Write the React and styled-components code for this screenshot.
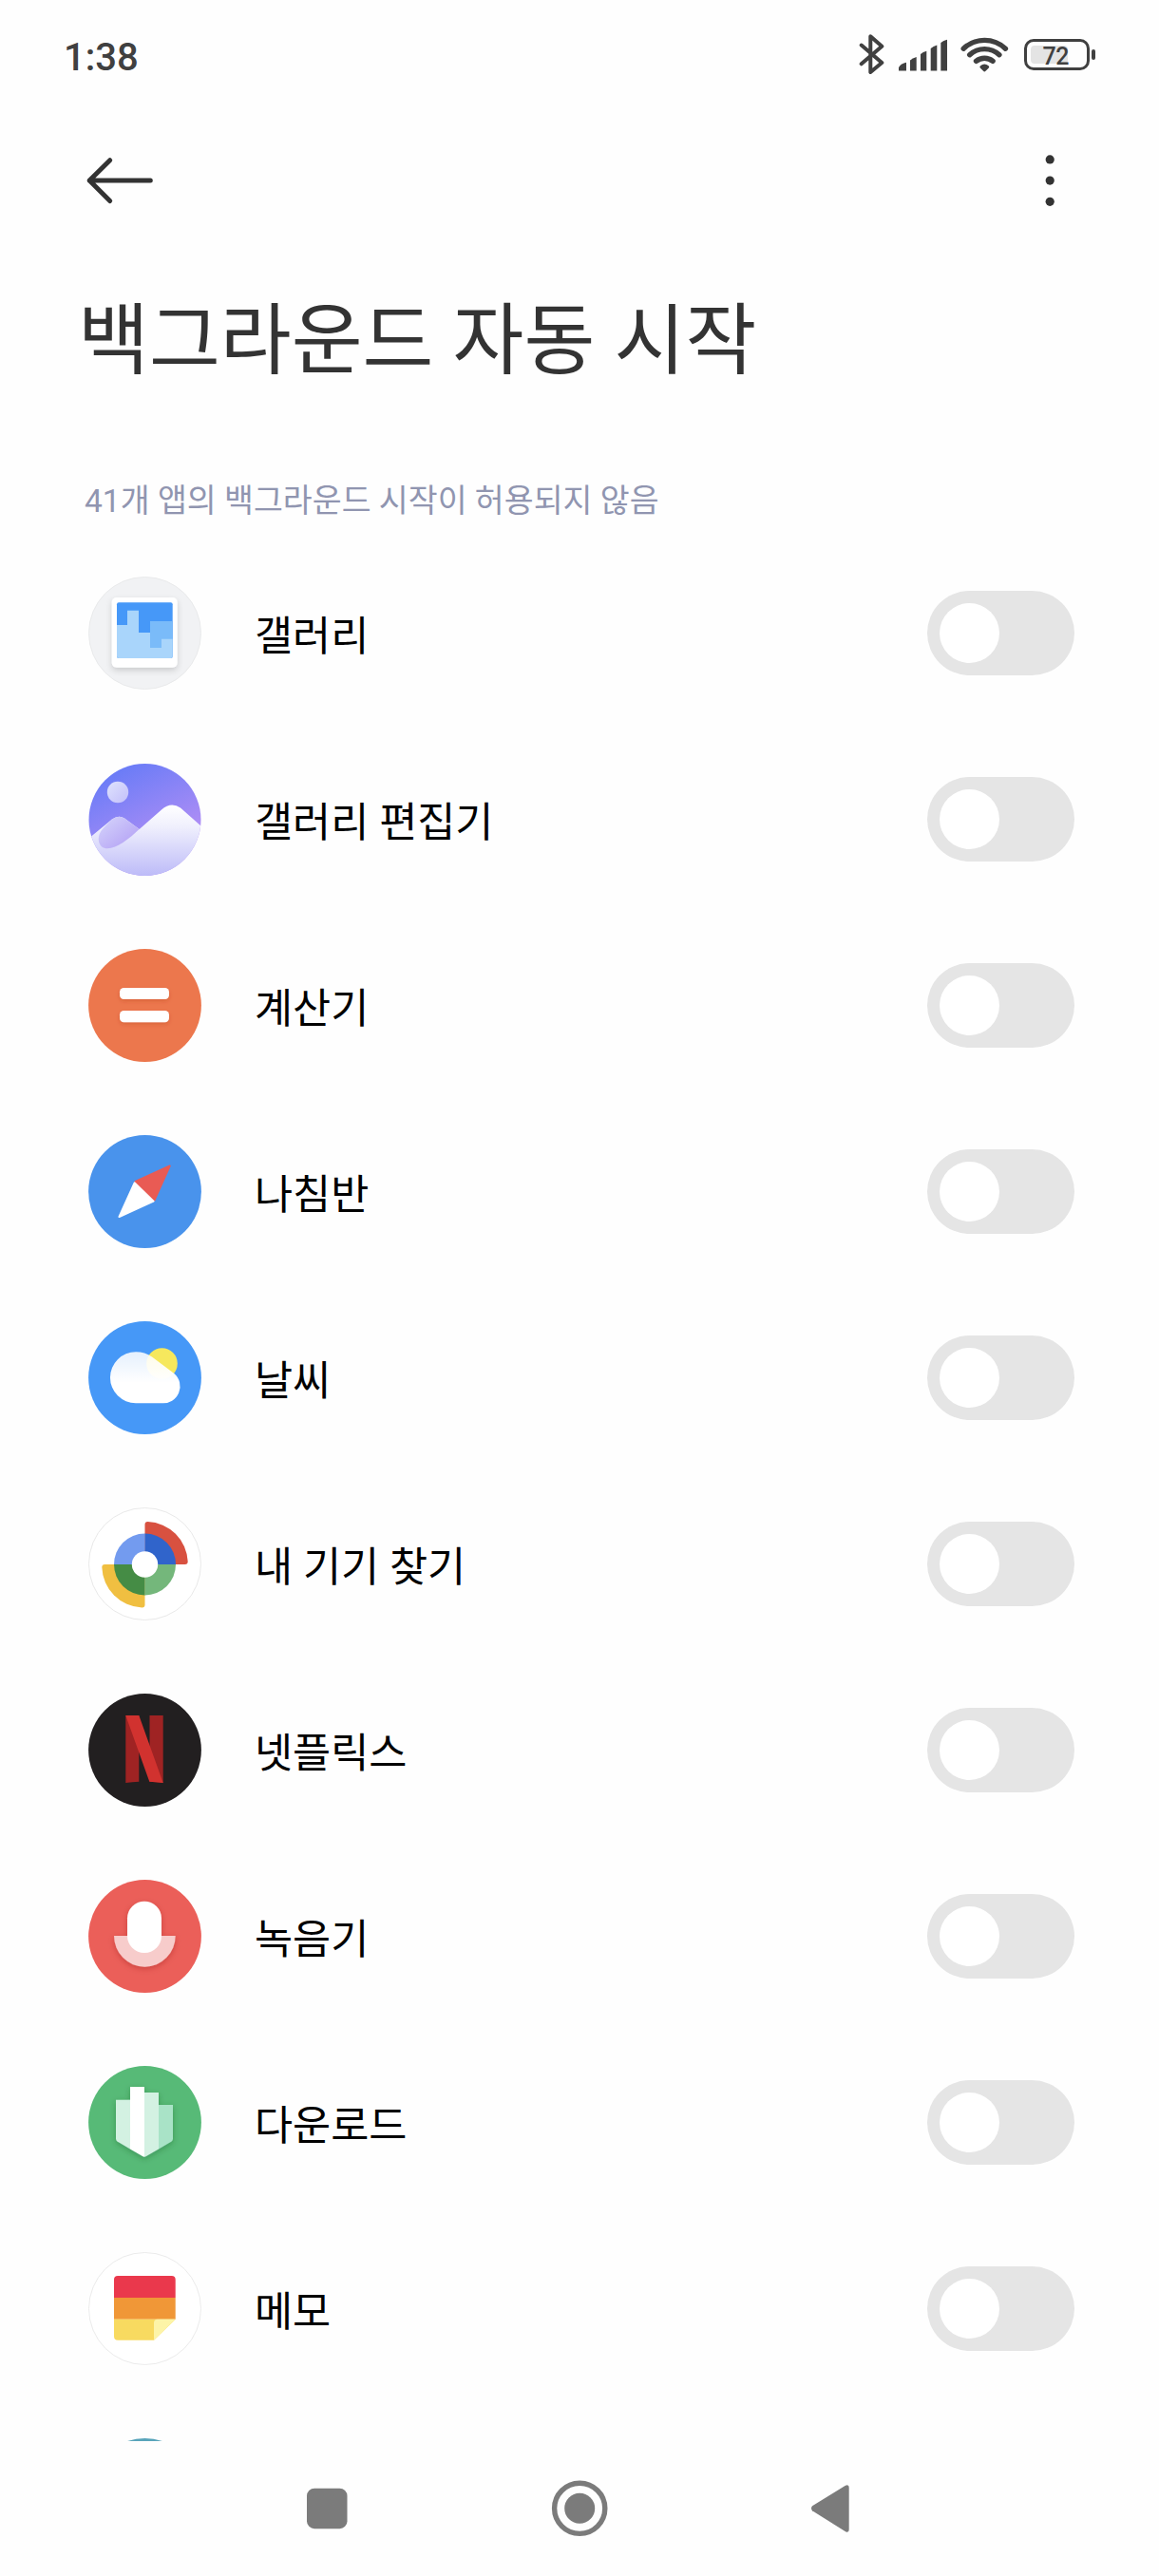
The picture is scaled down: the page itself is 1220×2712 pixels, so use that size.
import React, { useState } from "react";
import styled, { createGlobalStyle } from "styled-components";

const GlobalStyle = createGlobalStyle`
  * {
    box-sizing: border-box;
  }
  body {
    margin: 0;
    background: #fefefe;
    font-family: Roboto, "Noto Sans CJK KR", sans-serif;
  }
`;

const Screen = styled.div`
  display: flex;
  flex-direction: column;
  width: 1220px;
  height: 2712px;
  overflow: hidden;
  background: #fefefe;
`;
const StatusBar = styled.header`
  display: flex;
  align-items: center;
  justify-content: space-between;
  height: 114px;
  padding: 0 67px;
  color: #404040;
`;
const Clock = styled.span`
  margin-top: 7px;
  font-size: 40px;
  font-weight: 500;
  line-height: 48px;
`;
const StatusIcons = styled.div`
  display: flex;
  align-items: center;
`;
const StatusSvg = styled.svg`
  display: block;
  margin-right: ${(props) => props.$gap || 0}px;
`;
const Battery = styled.div`
  display: flex;
  align-items: center;
  gap: 2px;
`;
const BatteryBody = styled.div`
  width: 69px;
  height: 33px;
  padding: 4px 3.5px;
  border: 3px solid #404040;
  border-radius: 10px;
`;
const BatteryLevel = styled.div`
  display: flex;
  align-items: center;
  width: 39px;
  height: 19px;
  padding: 5px 0 0 13px;
  border-radius: 4px;
  background: #e4e4e4;
  font-size: 25px;
  font-weight: 500;
  line-height: 19px;
  letter-spacing: -0.5px;
`;
const BatteryTip = styled.div`
  width: 4px;
  height: 11px;
  border-radius: 2px;
  background: #404040;
`;
const Toolbar = styled.div`
  display: flex;
  align-items: center;
  justify-content: space-between;
  height: 148px;
  padding: 4px 94px 0 90px;
`;
const IconButton = styled.button`
  display: flex;
  padding: 0;
  border: none;
  background: none;
`;
const Title = styled.h1`
  margin: 37px 0 0 82px;
  color: #333333;
  font-size: 81.4px;
  font-weight: 400;
  line-height: 120px;
`;
const Summary = styled.p`
  margin: 85px 0 55px 89px;
  color: #9095b0;
  font-size: 33.6px;
  line-height: 48px;
`;
const AppList = styled.ul`
  flex: 1;
  min-height: 0;
  margin: 0;
  padding: 0 89px 0 93px;
  overflow: hidden;
  list-style: none;
`;
const AppRow = styled.li`
  display: flex;
  align-items: center;
  height: 119px;
  margin-bottom: 77px;
`;
const AppIcon = styled.svg`
  display: block;
  flex: none;
  width: 119px;
  height: 119px;
`;
const AppName = styled.span`
  flex: 1;
  margin-left: 56px;
  padding-top: 8px;
  color: #000000;
  font-size: 43.6px;
  line-height: 60px;
`;
const Toggle = styled.button`
  display: flex;
  align-items: center;
  justify-content: ${(props) => (props.$on ? "flex-end" : "flex-start")};
  width: 155px;
  height: 89px;
  padding: 0 13px;
  border: none;
  border-radius: 45px;
  background: ${(props) => (props.$on ? "#3482ff" : "#e5e5e5")};
`;
const Knob = styled.span`
  width: 63px;
  height: 63px;
  border-radius: 50%;
  background: #ffffff;
`;
const NavBar = styled.nav`
  display: flex;
  align-items: center;
  justify-content: center;
  gap: 206px;
  height: 142px;
`;
const NavButton = styled(IconButton)`
  width: 60px;
  justify-content: center;
`;

const Disc = ({ fill, stroke }) => (
  <circle
    cx="59.5"
    cy="59.5"
    r={stroke ? 59 : 59.4}
    fill={fill}
    stroke={stroke}
  />
);

const GalleryIcon = () => (
  <AppIcon viewBox="0 0 119 119">
    <defs>
      <filter id="card" x="-20%" y="-20%" width="140%" height="150%">
        <feDropShadow dx="0" dy="3" stdDeviation="3" floodOpacity="0.16" />
      </filter>
    </defs>
    <Disc fill="#f1f2f4" stroke="#e9eaeb" />
    <rect x="24.7" y="22" width="69" height="73.7" rx="5" fill="#fff" filter="url(#card)" />
    <rect x="30" y="27.3" width="58.7" height="58.7" rx="2" fill="#4698f8" />
    <path d="M65 47H88.7V76H65Z" fill="#7abbf9" />
    <path
      d="M30 51H41V35.7H53V59H65V75H77V65.7H88.7V84a2 2 0 0 1-2 2H32a2 2 0 0 1-2-2Z"
      fill="#a9d5fb"
    />
  </AppIcon>
);

const EditorIcon = () => (
  <AppIcon viewBox="0 0 119 119">
    <defs>
      <linearGradient id="sky" x1="0.3" y1="0" x2="0.65" y2="0.7">
        <stop offset="0" stopColor="#677bf7" />
        <stop offset="1" stopColor="#ac8df5" />
      </linearGradient>
      <linearGradient id="snow" x1="0" y1="0" x2="0" y2="1">
        <stop offset="0" stopColor="#ffffff" />
        <stop offset="0.3" stopColor="#f0f0fd" />
        <stop offset="1" stopColor="#bdbbf8" />
      </linearGradient>
      <linearGradient id="hill" x1="0" y1="0" x2="1" y2="1">
        <stop offset="0" stopColor="#d6d6fb" />
        <stop offset="1" stopColor="#b09bf4" />
      </linearGradient>
      <linearGradient id="moon" x1="0" y1="0" x2="1" y2="1">
        <stop offset="0" stopColor="#dfe3fd" />
        <stop offset="1" stopColor="#c3bffa" />
      </linearGradient>
      <clipPath id="round">
        <circle cx="59.5" cy="60" r="59" />
      </clipPath>
    </defs>
    <g clipPath="url(#round)">
      <rect width="119" height="119" fill="url(#sky)" />
      <circle cx="31" cy="31" r="11.2" fill="url(#moon)" />
      <path
        d="M0 80L25 59.5Q32 54.5 38 58.5L53.7 70L77 49.5Q87 40.500 97 47.500L119 67V119H0Z"
        fill="url(#snow)"
      />
      <path
        d="M25 59.5Q32 54.5 38 58.5L53.5 70C43 80 30 90.3 20 90.3C10.5 90.3 8 79 14 71Q17 67 25 59.5Z"
        fill="url(#hill)"
      />
    </g>
  </AppIcon>
);

const CalculatorIcon = () => (
  <AppIcon viewBox="0 0 119 119">
    <defs>
      <filter id="bars" x="-20%" y="-50%" width="140%" height="220%">
        <feDropShadow dx="0" dy="2" stdDeviation="2" floodColor="#a03000" floodOpacity="0.25" />
      </filter>
    </defs>
    <Disc fill="#ec774d" />
    <g fill="#fff" filter="url(#bars)">
      <rect x="33" y="41" width="52" height="12" rx="4.5" />
      <rect x="33" y="65" width="52" height="12.3" rx="4.5" />
    </g>
  </AppIcon>
);

const CompassIcon = () => (
  <AppIcon viewBox="0 0 119 119">
    <Disc fill="#4993ec" />
    <g strokeWidth="2" strokeLinejoin="round">
      <path d="M85.7 32.5L49.5 49L69.5 68.5Z" fill="#e95b54" stroke="#e95b54" />
      <path d="M32.5 86L48.6 50.3L68.6 69.6Z" fill="#fff" stroke="#fff" />
    </g>
  </AppIcon>
);

const WeatherIcon = () => (
  <AppIcon viewBox="0 0 119 119">
    <defs>
      <linearGradient id="cloud" x1="0" y1="0" x2="0" y2="1">
        <stop offset="0" stopColor="#fff" stopOpacity="0.86" />
        <stop offset="0.6" stopColor="#fff" />
      </linearGradient>
    </defs>
    <Disc fill="#4698f7" />
    <circle cx="77.5" cy="44.5" r="16.3" fill="#f6e85d" />
    <path
      d="M50 32.2A27 27 0 0 0 50 86.3H77.5A17.8 17.8 0 0 0 90.3 55L67 37.5Q59.5 32.2 50 32.2Z"
      fill="url(#cloud)"
    />
  </AppIcon>
);

const FindDeviceIcon = () => (
  <AppIcon viewBox="0 0 119 119">
    <Disc fill="#fff" stroke="#e9e9e9" />
    <path d="M59.5 60V18q0-3 3-3A44 44 0 0 1 104.7 57q0 3-3 3Z" fill="#d85140" />
    <path d="M59.5 60V102.5q0 3-3 3A44 44 0 0 1 14.3 63q0-3 3-3Z" fill="#f0bf41" />
    <path d="M59.5 60H27A32.5 32.5 0 0 1 59.5 27.5Z" fill="#739bef" />
    <path d="M59.5 60V27.5A32.5 32.5 0 0 1 92 60Z" fill="#3064cb" />
    <path d="M59.5 60H92A32.5 32.5 0 0 1 59.5 92.5Z" fill="#74b77b" />
    <path d="M59.5 60V92.5A32.5 32.5 0 0 1 27 60Z" fill="#458c45" />
    <circle cx="59.5" cy="60" r="13.7" fill="#fff" />
  </AppIcon>
);

const NetflixIcon = () => (
  <AppIcon viewBox="0 0 119 119">
    <Disc fill="#221f20" />
    <path d="M39.3 23H53.3V92.7Q46 93 39.3 94Z" fill="#9f2323" />
    <path d="M64.5 23H78.7V94L64.5 92.7Z" fill="#9f2323" />
    <path d="M39.3 23H53.3L78.7 94Q71 93 64.3 92.7Z" fill="#d1322f" />
  </AppIcon>
);

const RecorderIcon = () => (
  <AppIcon viewBox="0 0 119 119">
    <defs>
      <filter id="mic" x="-20%" y="-20%" width="140%" height="150%">
        <feDropShadow dx="0" dy="2" stdDeviation="3" floodColor="#801010" floodOpacity="0.3" />
      </filter>
    </defs>
    <Disc fill="#eb5f59" />
    <g filter="url(#mic)">
      <path d="M27 59H91.7A32.35 32.7 0 0 1 27 59Z" fill="#f7cccb" />
      <rect x="41" y="22.7" width="36" height="54.3" rx="18" fill="#fff" />
    </g>
  </AppIcon>
);

const DownloadIcon = () => (
  <AppIcon viewBox="0 0 119 119">
    <defs>
      <filter id="arrow" x="-20%" y="-20%" width="140%" height="150%">
        <feDropShadow dx="0" dy="2" stdDeviation="3" floodColor="#0c4020" floodOpacity="0.3" />
      </filter>
    </defs>
    <Disc fill="#57ba77" />
    <g filter="url(#arrow)">
      <path d="M29 35.7H44V87.5L30.5 79.5Q29 78.5 29 76.5Z" fill="#d3f1e2" />
      <path d="M44 22H59V95.7Q58 95.7 57 95L44 87.5Z" fill="#fff" />
      <path d="M59 28H74V87.5L61 95Q60 95.7 59 95.7Z" fill="#d3f1e2" />
      <path d="M74 41H89V76.5Q89 78.5 87.5 79.5L74 87.5Z" fill="#a9e3c7" />
    </g>
  </AppIcon>
);

const MemoIcon = () => (
  <AppIcon viewBox="0 0 119 119">
    <Disc fill="#fff" stroke="#ebebeb" />
    <path d="M27 48V29q0-4 4-4H87.7q4 0 4 4V48Z" fill="#ea384c" />
    <path d="M27 48H91.7V70.7H27Z" fill="#f09737" />
    <path d="M27 70.7H91.7L69 92.7H31q-4 0-4-4Z" fill="#f8da60" />
    <path d="M91.7 70.7L69 92.7V74.5q0-3.8 3.8-3.8Z" fill="#fdf4a7" />
  </AppIcon>
);

const TealIcon = () => (
  <AppIcon viewBox="0 0 119 119">
    <Disc fill="#58a4ba" />
  </AppIcon>
);

const apps = [
  { name: "갤러리", Icon: GalleryIcon },
  { name: "갤러리 편집기", Icon: EditorIcon },
  { name: "계산기", Icon: CalculatorIcon },
  { name: "나침반", Icon: CompassIcon },
  { name: "날씨", Icon: WeatherIcon },
  { name: "내 기기 찾기", Icon: FindDeviceIcon },
  { name: "넷플릭스", Icon: NetflixIcon },
  { name: "녹음기", Icon: RecorderIcon },
  { name: "다운로드", Icon: DownloadIcon },
  { name: "메모", Icon: MemoIcon },
];

const AppItem = ({ name, Icon }) => {
  const [on, setOn] = useState(false);
  return (
    <AppRow>
      <Icon />
      <AppName>{name}</AppName>
      <Toggle
        type="button"
        role="switch"
        aria-checked={on}
        aria-label={name}
        $on={on}
        onClick={() => setOn(!on)}
      >
        <Knob />
      </Toggle>
    </AppRow>
  );
};

const App = () => {
  return (
    <Screen>
      <GlobalStyle />
      <StatusBar>
        <Clock>1:38</Clock>
        <StatusIcons>
          <StatusSvg width="28" height="44" viewBox="904 35 28 44" $gap={14}>
            <path
              d="M906.7 47.5L928.3 66L916.3 76V38.3L928.3 48.7L906.7 67.3"
              fill="none"
              stroke="#404040"
              strokeWidth="4"
              strokeLinecap="round"
              strokeLinejoin="round"
            />
          </StatusSvg>
          <StatusSvg width="51" height="44" viewBox="946 35 51 44" $gap={14}>
            <g fill="#404040">
              <path d="M946 74.5V71Q948.5 66.5 954 65.7V74.5Z" />
              <path d="M958 74.5V63.5Q960.5 61 964.7 60V74.5Z" />
              <path d="M969 74.5V57Q971.5 54.7 975.3 53.7V74.5Z" />
              <path d="M979.7 74.5V51Q982.3 48.5 986.3 47.5V74.5Z" />
              <path d="M990.3 74.5V45Q993 42.5 997 41.7V74.5Z" />
            </g>
          </StatusSvg>
          <StatusSvg width="51" height="44" viewBox="1011 35 51 44" $gap={16}>
            <g fill="none" stroke="#404040" strokeWidth="5.4" strokeLinecap="round">
              <path d="M1014.2 51.2A32 32 0 0 1 1058.4 51.2" />
              <path d="M1020.7 57.7A23 23 0 0 1 1051.9 57.7" />
              <path d="M1027.5 64.3A14 14 0 0 1 1045.1 64.3" />
            </g>
            <path
              d="M1032 69.3Q1036.3 65.7 1040.6 69.3Q1042 70.5 1040.6 71.8L1037.5 74.8Q1036.3 76 1035.1 74.8L1032 71.8Q1030.6 70.5 1032 69.3Z"
              fill="#404040"
            />
          </StatusSvg>
          <Battery>
            <BatteryBody>
              <BatteryLevel>72</BatteryLevel>
            </BatteryBody>
            <BatteryTip />
          </Battery>
        </StatusIcons>
      </StatusBar>
      <Toolbar>
        <IconButton type="button" aria-label="뒤로">
          <svg width="72" height="52" viewBox="90 164 72 52">
            <path
              d="M115.7 168.7L94.2 190L115.7 211.5M94.2 190H158.3"
              fill="none"
              stroke="#333"
              strokeWidth="5"
              strokeLinecap="round"
              strokeLinejoin="round"
            />
          </svg>
        </IconButton>
        <IconButton type="button" aria-label="메뉴">
          <svg width="42" height="60" viewBox="1084 160 42 60" fill="#333">
            <circle cx="1105.2" cy="167.9" r="4.6" />
            <circle cx="1105.2" cy="190.1" r="4.6" />
            <circle cx="1105.2" cy="212.3" r="4.6" />
          </svg>
        </IconButton>
      </Toolbar>
      <Title>백그라운드 자동 시작</Title>
      <Summary>41개 앱의 백그라운드 시작이 허용되지 않음</Summary>
      <AppList>
        {apps.map(({ name, Icon }) => (
          <AppItem key={name} name={name} Icon={Icon} />
        ))}
        {/* next row, only its top edge is above the nav bar */}
        <AppRow>
          <TealIcon />
        </AppRow>
      </AppList>
      <NavBar>
        <NavButton type="button" aria-label="최근 앱">
          <svg width="60" height="60">
            <rect x="9" y="8.7" width="42.5" height="42.5" rx="8" fill="#7b7b7b" />
          </svg>
        </NavButton>
        <NavButton type="button" aria-label="홈">
          <svg width="60" height="60">
            <circle cx="30.2" cy="29.8" r="26.6" fill="none" stroke="#7b7b7b" strokeWidth="5.4" />
            <circle cx="30.2" cy="29.8" r="16" fill="#7b7b7b" />
          </svg>
        </NavButton>
        <NavButton type="button" aria-label="이전">
          <svg width="60" height="60">
            <path
              d="M9 27.3L44 5.7Q47.7 4 47.7 8V52Q47.7 56 44 54.3L9 32.3Q7 29.8 9 27.3Z"
              fill="#7b7b7b"
            />
          </svg>
        </NavButton>
      </NavBar>
    </Screen>
  );
};

export default App;
